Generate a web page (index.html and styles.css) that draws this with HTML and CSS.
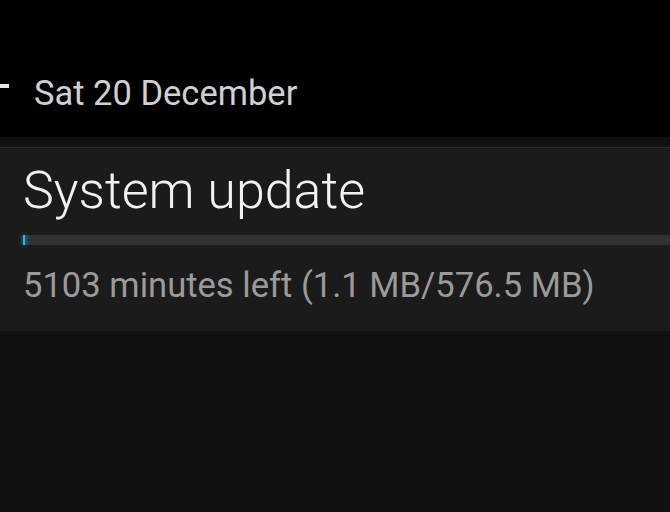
FILE: index.html
```html
<!DOCTYPE html>
<html>
<head>
<meta charset="utf-8">
<link rel="stylesheet" href="styles.css">
</head>
<body>
<header class="statusbar">
  <span class="clock-edge"></span>
  <span class="date">Sat 20 December</span>
</header>
<div class="gap"></div>
<section class="card">
  <div class="title">System update</div>
  <div class="progress"><div class="progress-fill" style="width:2px"></div></div>
  <div class="subtitle">5103 minutes left (1.1 MB/576.5 MB)</div>
</section>
</body>
</html>
```
FILE: styles.css
```css
html, body {
  margin: 0;
  padding: 0;
  background: #111111;
  font-family: Roboto, "Noto Sans", sans-serif;
  width: 670px;
  height: 512px;
  overflow: hidden;
}
.statusbar {
  background: #000;
  height: 137px;
  box-sizing: border-box;
  padding-top: 73px;
  display: flex;
  align-items: flex-start;
  position: relative;
}
.clock-edge {
  position: absolute;
  left: 0;
  top: 84px;
  width: 9px;
  height: 4px;
  background: #e8e8e8;
}
.date {
  margin-left: 34px;
  font-size: 34.5px;
  line-height: 40px;
  color: #d0d0d0;
}
.gap {
  height: 10px;
  background: #111111;
}
.card {
  background: #1b1b1b;
  border-top: 1px solid #2a2a2a;
  height: 184px;
  box-sizing: border-box;
  padding: 13px 0 0 24px;
}
.title {
  font-size: 52px;
  font-weight: 300;
  line-height: 60px;
  color: #f2f2f2;
  margin-left: -1px;
}
.progress {
  margin-top: 14px;
  margin-left: -1px;
  height: 10px;
  background: #333333;
  position: relative;
}
.progress-fill {
  height: 100%;
  background: #33b5e5;
  box-shadow: 0 0 4px #33b5e5;
}
.subtitle {
  margin-top: 20px;
  font-size: 34.6px;
  line-height: 40px;
  color: #9a9a9a;
  margin-left: -1px;
}
```
